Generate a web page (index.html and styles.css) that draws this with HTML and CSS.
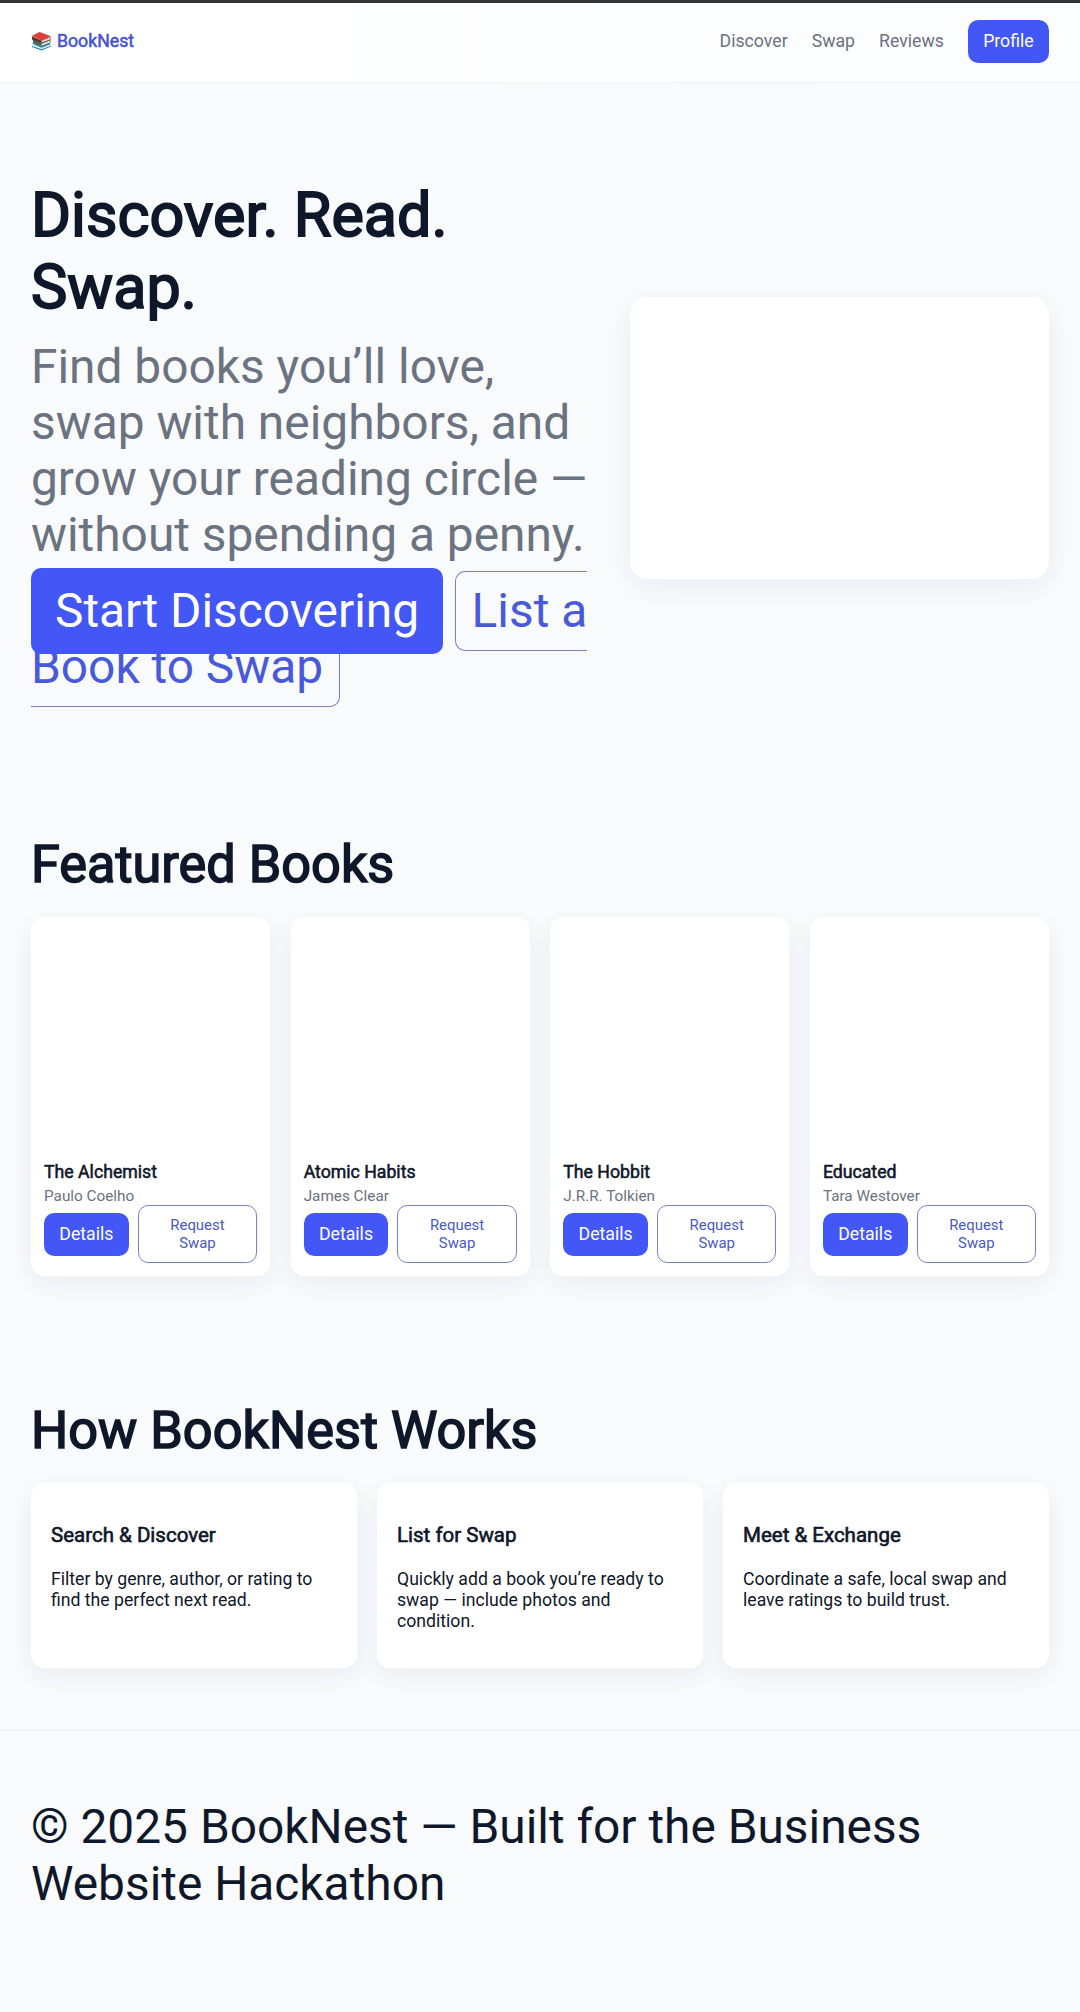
FILE: index.html
```html
<!DOCTYPE html>
<html lang="en">
<head>
<meta charset="utf-8">
<title>BookNest</title>
<link rel="stylesheet" href="styles.css">
</head>
<body>
<header class="header">
  <a class="brand"><svg class="logo" viewBox="0 0 22 22" aria-hidden="true">
    <path d="M1 14.5 14 11l7 4-10 4.600z" fill="#2f8fc0"/>
    <path d="M1 14.500v3l10 3.600 10-4v-2.100l-10 3.500z" fill="#d9eef5"/>
    <path d="M1 16.800v1l10 3.600 10-4v-1l-10 3.800z" fill="#2580b2"/>
    <path d="M2 9.500 11 14l9.500-4v3.500L11 17.500l-9-4z" fill="#4b6b56"/>
    <path d="M11 14.500l9-3.500v2l-9 3.500z" fill="#dfe6d8"/>
    <path d="M1 6.500 11 11l10-4v3.200L11 14 1 10z" fill="#5a3137"/>
    <path d="M11 11.200 21 7.500v2.200l-10 3.500z" fill="#e6dcd6"/>
    <path d="M1 6 9 2l12 4.500-10 4.800z" fill="#dc4038"/>
  </svg>BookNest</a>
  <nav class="nav">
    <a>Discover</a><a>Swap</a><a>Reviews</a><a class="btn">Profile</a>
  </nav>
</header>
<main>
  <section class="hero">
    <div class="hero-copy">
      <h1>Discover. Read. Swap.</h1>
      <p>Find books you’ll love, swap with neighbors, and grow your reading circle — without spending a penny.</p>
      <div class="actions"><a class="start">Start Discovering</a><a class="list">List a Book to Swap</a></div>
    </div>
    <div class="hero-card"></div>
  </section>
  <section class="featured">
    <h2>Featured Books</h2>
    <div class="books">
      <article class="book"><div class="cover"></div><h3>The Alchemist</h3><p>Paulo Coelho</p><div class="row"><a class="btn">Details</a><a class="ghost">Request Swap</a></div></article>
      <article class="book"><div class="cover"></div><h3>Atomic Habits</h3><p>James Clear</p><div class="row"><a class="btn">Details</a><a class="ghost">Request Swap</a></div></article>
      <article class="book"><div class="cover"></div><h3>The Hobbit</h3><p>J.R.R. Tolkien</p><div class="row"><a class="btn">Details</a><a class="ghost">Request Swap</a></div></article>
      <article class="book"><div class="cover"></div><h3>Educated</h3><p>Tara Westover</p><div class="row"><a class="btn">Details</a><a class="ghost">Request Swap</a></div></article>
    </div>
  </section>
  <section class="how">
    <h2>How BookNest Works</h2>
    <div class="steps">
      <article class="step"><h3>Search &amp; Discover</h3><p>Filter by genre, author, or rating to find the perfect next read.</p></article>
      <article class="step"><h3>List for Swap</h3><p>Quickly add a book you’re ready to swap — include photos and condition.</p></article>
      <article class="step"><h3>Meet &amp; Exchange</h3><p>Coordinate a safe, local swap and leave ratings to build trust.</p></article>
    </div>
  </section>
</main>
<footer class="footer">© 2025 BookNest — Built for the Business Website Hackathon</footer>
</body>
</html>
```
FILE: styles.css
```css
* { box-sizing: border-box; }
body {
  margin: 0;
  min-height: 2012px;
  background: #f8fafc;
  color: #0f172a;
  font-family: Roboto, "Liberation Sans", sans-serif;
  font-size: 17.700px;
  line-height: 21px;
}
h1, h2, h3, p { margin: 0; font-weight: 400; }
h1, h2, h3, .brand { -webkit-text-stroke: 0.03em currentColor; }

.header {
  display: flex;
  justify-content: space-between;
  align-items: flex-start;
  height: 83px;
  padding: 17px 31px 0;
  border-top: 3px solid #343437;
  border-bottom: 1px solid #eef2f6;
  background: linear-gradient(90deg, #fff, #fcfdff);
}
.brand { display: flex; align-items: center; height: 43px; color: #4453d6; }
.logo { width: 21px; height: 21px; margin: 0 5px 2px 0; -webkit-text-stroke: 0; }
.nav { display: flex; align-items: center; gap: 24px; color: #6b7280; }
.btn {
  padding: 11px 15.300px;
  border-radius: 10.200px;
  background: #4257f6;
  color: #fff;
}

.hero {
  display: grid;
  grid-template-columns: 557px 419px;
  justify-content: space-between;
  align-items: center;
  height: 709px;
  padding: 0 31px;
}
.hero h1 { font-size: 61.100px; line-height: 72px; }
.hero-copy p { margin: 16px 0 20px; color: #6b7280; }
.hero-copy { padding-bottom: 2px; font-size: 47.850px; line-height: 56px; }
.start {
  position: relative;
  padding: 15px 24px;
  border-radius: 10px;
  background: #4257f6;
  color: #fff;
}
.list {
  margin-left: 12px;
  padding: 11px 15.500px;
  border: 1px solid #7681c4;
  border-radius: 10px;
  color: #4859dc;
}
.hero-card {
  height: 282px;
  border-radius: 18px;
  background: #fff;
  box-shadow: 0 8px 30px rgba(16, 24, 64, .06);
}

h2 { font-size: 52.250px; line-height: 63px; }
.featured { padding: 41px 31px 0; height: 567px; }
.books { display: grid; grid-template-columns: repeat(4, 1fr); gap: 20.500px; margin-top: 21px; }
.book {
  height: 359px;
  padding: 13px;
  border-radius: 13px;
  background: #fff;
  box-shadow: 0 8px 26px rgba(16, 24, 64, .06);
}
.cover { height: 232px; }
.book h3 { font-size: 17.700px; line-height: 21px; }
.book p { margin-top: 4px; color: #6b7280; font-size: 15.300px; line-height: 18px; }
.row { display: flex; align-items: center; gap: 9px; }
.ghost {
  flex: 1;
  padding: 10px 14px;
  border: 1px solid #7681c4;
  border-radius: 10.200px;
  color: #4859c8;
  font-size: 14.900px;
  line-height: 18px;
  text-align: center;
}

.how { padding: 40px 31px 0; height: 371px; }
.steps { display: grid; grid-template-columns: repeat(3, 1fr); gap: 20px; margin-top: 21px; }
.step {
  height: 185px;
  padding: 40px 20px 0;
  border-radius: 13px;
  background: #fff;
  box-shadow: 0 8px 26px rgba(16, 24, 64, .06);
}
.step h3 { margin-bottom: 22px; font-size: 20.500px; line-height: 24px; }
.step p { font-size: 17.650px; }
.footer {
  padding: 68px 31px 0;
  border-top: 1px solid #edf1f5;
  font-size: 47.850px;
  line-height: 57px;
}
```
